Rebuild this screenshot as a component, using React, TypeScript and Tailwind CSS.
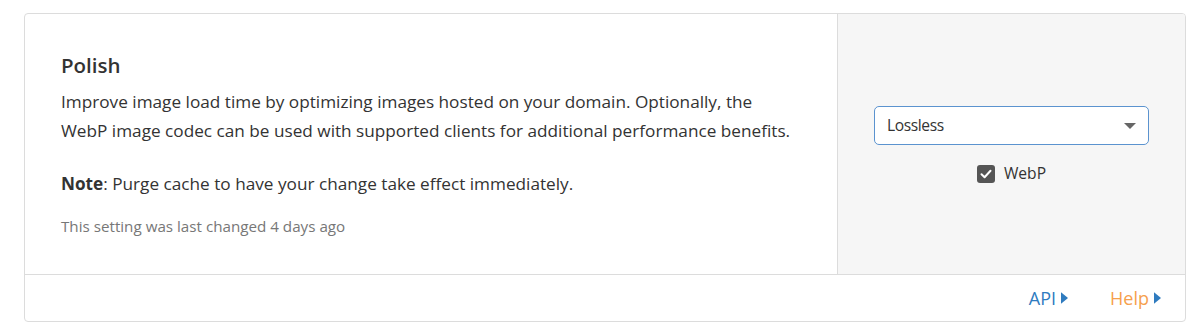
import type { ReactElement } from "react";

// Kucuk sag ok (API / Help linkleri)
function Caret({ className }: { className?: string }): ReactElement {
  return (
    <svg viewBox="0 0 6 10" className={className} aria-hidden="true">
      <path d="M0 0 L6 5 L0 10 Z" fill="currentColor" />
    </svg>
  );
}

export default function App(): ReactElement {
  return (
    <div className="min-h-[333px] bg-white pt-[13px] pl-[24px] [font-family:'Open_Sans','Noto_Sans',sans-serif] text-[#333]">
      <div className="w-[1162px] overflow-hidden rounded-[4px] border border-[#dcdcdc] bg-white">
        <div className="flex border-b border-[#dcdcdc]">
          {/* sol: baslik + aciklama */}
          <div className="flex-1 px-[36px] pt-[38px] pb-[38px]">
            <h3 className="text-[20.5px] leading-[26px] font-semibold text-[#333]">Polish</h3>
            <p className="mt-[9px] text-[17.2px] leading-[29px]">
              Improve image load time by optimizing images hosted on your domain. Optionally, the
              <br />
              WebP image codec can be used with supported clients for additional performance benefits.
            </p>
            <p className="mt-[24px] text-[17.2px] leading-[29px]">
              <b className="font-bold">Note</b>: Purge cache to have your change take effect immediately.
            </p>
            <p className="mt-[18px] text-[15.2px] leading-[20px] text-[#777]">
              This setting was last changed 4 days ago
            </p>
          </div>
          {/* sag: kontrol paneli */}
          <div className="flex w-[348px] shrink-0 flex-col items-center justify-center border-l border-[#dcdcdc] bg-[#f6f6f6] px-[36px] pt-[4px]">
            <div className="flex h-[39px] w-full items-center justify-between rounded-[5px] border border-[#5b93cf] bg-white pl-[12px] pr-[12px]">
              <span className="text-[15.6px] text-[#333] [letter-spacing:-0.4px]">Lossless</span>
              <svg viewBox="0 0 12 6" className="h-[6px] w-[12px] text-[#666]" aria-hidden="true">
                <path d="M0 0 H12 L6 6 Z" fill="currentColor" />
              </svg>
            </div>
            <label className="mt-[17px] flex items-center gap-[9px]">
              <span className="flex h-[18px] w-[18px] items-center justify-center rounded-[3px] bg-[#555]">
                <svg viewBox="0 0 12 10" className="h-[10px] w-[12px]" aria-hidden="true">
                  <path d="M1.5 5.2 L4.6 8.2 L10.5 1.8" fill="none" stroke="#fff" strokeWidth="2" strokeLinecap="round" strokeLinejoin="round" />
                </svg>
              </span>
              <span className="text-[15.6px] text-[#333]">WebP</span>
            </label>
          </div>
        </div>
        {/* alt bar */}
        <div className="flex h-[46px] items-center justify-end gap-[42px] pr-[24px] text-[18px]">
          <a className="flex items-center gap-[5px] text-[#2f7bbf]">
            API
            <Caret className="h-[12px] w-[7px] text-[#2f7bbf]" />
          </a>
          <a className="flex items-center gap-[5px] text-[#f6a04d]">
            Help
            <Caret className="h-[12px] w-[7px] text-[#2f7bbf]" />
          </a>
        </div>
      </div>
    </div>
  );
}
